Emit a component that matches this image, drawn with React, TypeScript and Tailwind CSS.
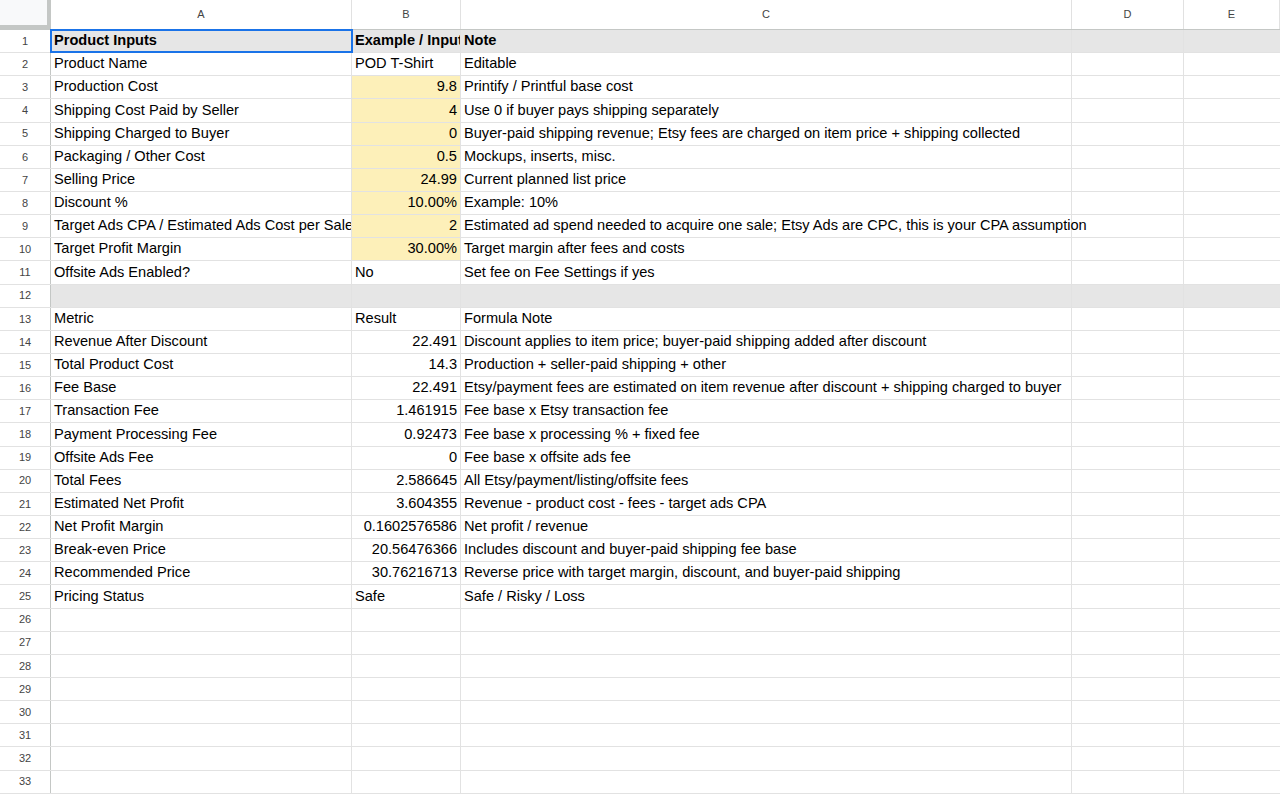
const cols = ['A', 'B', 'C', 'D', 'E']
const widths = ['w-[301px]', 'w-[109px]', 'w-[611px]', 'w-[112px]', 'flex-1']

type Row = [string, string, string, boolean?]
const data: Row[] = [
  ['Product Inputs', 'Example / Input', 'Note'],
  ['Product Name', 'POD T-Shirt', 'Editable'],
  ['Production Cost', '9.8', 'Printify / Printful base cost', true],
  ['Shipping Cost Paid by Seller', '4', 'Use 0 if buyer pays shipping separately', true],
  ['Shipping Charged to Buyer', '0', 'Buyer-paid shipping revenue; Etsy fees are charged on item price + shipping collected', true],
  ['Packaging / Other Cost', '0.5', 'Mockups, inserts, misc.', true],
  ['Selling Price', '24.99', 'Current planned list price', true],
  ['Discount %', '10.00%', 'Example: 10%', true],
  ['Target Ads CPA / Estimated Ads Cost per Sale', '2', 'Estimated ad spend needed to acquire one sale; Etsy Ads are CPC, this is your CPA assumption', true],
  ['Target Profit Margin', '30.00%', 'Target margin after fees and costs', true],
  ['Offsite Ads Enabled?', 'No', 'Set fee on Fee Settings if yes'],
  ['', '', ''],
  ['Metric', 'Result', 'Formula Note'],
  ['Revenue After Discount', '22.491', 'Discount applies to item price; buyer-paid shipping added after discount'],
  ['Total Product Cost', '14.3', 'Production + seller-paid shipping + other'],
  ['Fee Base', '22.491', 'Etsy/payment fees are estimated on item revenue after discount + shipping charged to buyer'],
  ['Transaction Fee', '1.461915', 'Fee base x Etsy transaction fee'],
  ['Payment Processing Fee', '0.92473', 'Fee base x processing % + fixed fee'],
  ['Offsite Ads Fee', '0', 'Fee base x offsite ads fee'],
  ['Total Fees', '2.586645', 'All Etsy/payment/listing/offsite fees'],
  ['Estimated Net Profit', '3.604355', 'Revenue - product cost - fees - target ads CPA'],
  ['Net Profit Margin', '0.1602576586', 'Net profit / revenue'],
  ['Break-even Price', '20.56476366', 'Includes discount and buyer-paid shipping fee base'],
  ['Recommended Price', '30.76216713', 'Reverse price with target margin, discount, and buyer-paid shipping'],
  ['Pricing Status', 'Safe', 'Safe / Risky / Loss'],
]
while (data.length < 33) data.push(['', '', ''])

const isNum = (s: string) => /^[\d.]+%?$/.test(s)

export default function App() {
  return (
    <div className="w-[1280px] h-[800px] overflow-hidden bg-white text-[14.6px] text-black" style={{ fontFamily: '"Liberation Sans", Arial, sans-serif' }}>
      <div className="flex h-[30px] bg-white border-b border-[#c4c7c5]">
        <div className="w-[51px] shrink-0 bg-[#f8f9fa] border-r-4 border-b-4 border-[#c4c7c5]" />
        {cols.map((c, i) => (
          <div key={c} className={`${widths[i]} shrink-0 flex items-center justify-center text-[11px] text-[#444] border-r border-[#e1e1e1]`}>{c}</div>
        ))}
      </div>
      {data.map((r, idx) => {
        const n = idx + 1
        const gray = n === 1 || n === 12
        const bold = n === 1
        return (
          <div key={n} className={`flex h-[23.15px] border-b border-[#e2e2e2] ${gray ? 'bg-[#e6e6e6]' : ''} ${bold ? 'font-bold' : ''}`}>
            <div className="w-[51px] shrink-0 flex items-center justify-center text-[11px] text-[#444] font-normal bg-white border-r border-[#c4c7c5]">{n}</div>
            <div className={`w-[301px] shrink-0 flex items-center px-[3px] overflow-hidden whitespace-nowrap border-r border-[#e2e2e2] ${n === 1 ? 'outline-2 outline-[#1a73e8] -outline-offset-1 relative' : ''}`}>{r[0]}</div>
            <div className={`w-[109px] shrink-0 flex items-center px-[3px] overflow-hidden whitespace-nowrap border-r border-[#e2e2e2] ${r[3] ? 'bg-[#fdf0b9]' : ''} ${isNum(r[1]) ? 'justify-end' : ''}`}>{r[1]}</div>
            <div className="w-[611px] shrink-0 flex items-center px-[3px] whitespace-nowrap border-r border-[#e2e2e2] relative z-10">{r[2]}</div>
            <div className="w-[112px] shrink-0 border-r border-[#e2e2e2]" />
            <div className="flex-1" />
          </div>
        )
      })}
    </div>
  )
}
